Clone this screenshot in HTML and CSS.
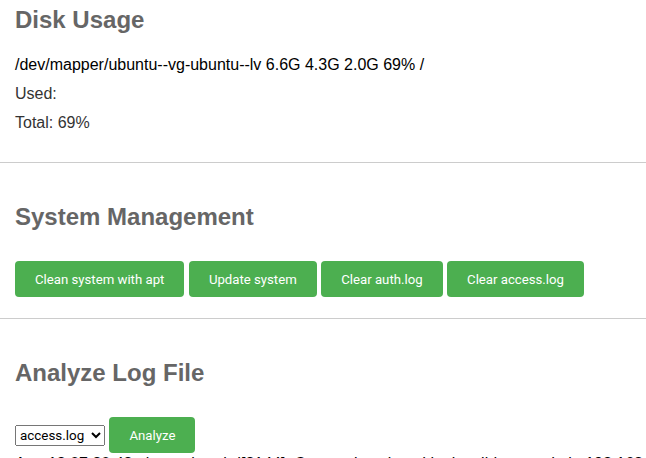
FILE: index.html
```html
<!DOCTYPE html>
<html>
<head>
<meta charset="utf-8">
<title>Server Dashboard</title>
<link rel="stylesheet" href="styles.css">
</head>
<body>
<section class="section first">
  <h2>Disk Usage</h2>
  <div class="line strong">/dev/mapper/ubuntu--vg-ubuntu--lv 6.6G 4.3G 2.0G 69% /</div>
  <div class="line">Used:</div>
  <div class="line">Total: 69%</div>
</section>
<section class="section mid">
  <h2>System Management</h2>
  <div class="actions">
    <button class="btn">Clean system with apt</button>
    <button class="btn">Update system</button>
    <button class="btn">Clear auth.log</button>
    <button class="btn">Clear access.log</button>
  </div>
</section>
<section class="section last">
  <h2>Analyze Log File</h2>
  <form class="analyze">
    <select class="picker">
      <option>access.log</option>
      <option>auth.log</option>
    </select>
    <button class="btn" type="button">Analyze</button>
  </form>
  <div class="log">Aug 13 07:30:43 ubuntu-lv sshd[2144]: Connection closed by invalid user admin 192.168.1.23 port 51234 [preauth] failed</div>
</section>
</body>
</html>
```

FILE: styles.css
```css
html, body {
  margin: 0;
  padding: 0;
  background: #fff;
  overflow: hidden;
}
body {
  font-family: "Liberation Sans", Arial, sans-serif;
  font-size: 16px;
  color: #333;
}
.section {
  padding: 20px 15px;
  border-bottom: 1px solid #ccc;
}
.section.first {
  padding-top: 0;
  padding-bottom: 25px;
}
.section.mid {
  padding-bottom: 21px;
}
.section.last {
  border-bottom: none;
}
h2 {
  font-size: 24px;
  font-weight: bold;
  color: #666;
  margin: 20px 0 30px;
}
.first h2 {
  margin: 6px 0 16px;
}
.line {
  height: 29px;
  line-height: 29px;
  white-space: nowrap;
}
.line.strong {
  color: #000;
}
.actions {
  display: flex;
  gap: 4.5px;
}
.btn {
  background: #4caf50;
  color: #fff;
  border: none;
  border-radius: 4px;
  padding: 0 20px;
  height: 36px;
  font-family: Roboto, "Noto Sans", sans-serif;
  font-size: 13.2px;
  cursor: pointer;
}
.analyze {
  margin: 0;
  white-space: nowrap;
}
.picker {
  font-family: Roboto, "Noto Sans", sans-serif;
  font-size: 13.4px;
  width: 90px;
  height: 21px;
}
.log {
  color: #000;
  white-space: nowrap;
  line-height: 18px;
  margin-top: 2px;
}
```
